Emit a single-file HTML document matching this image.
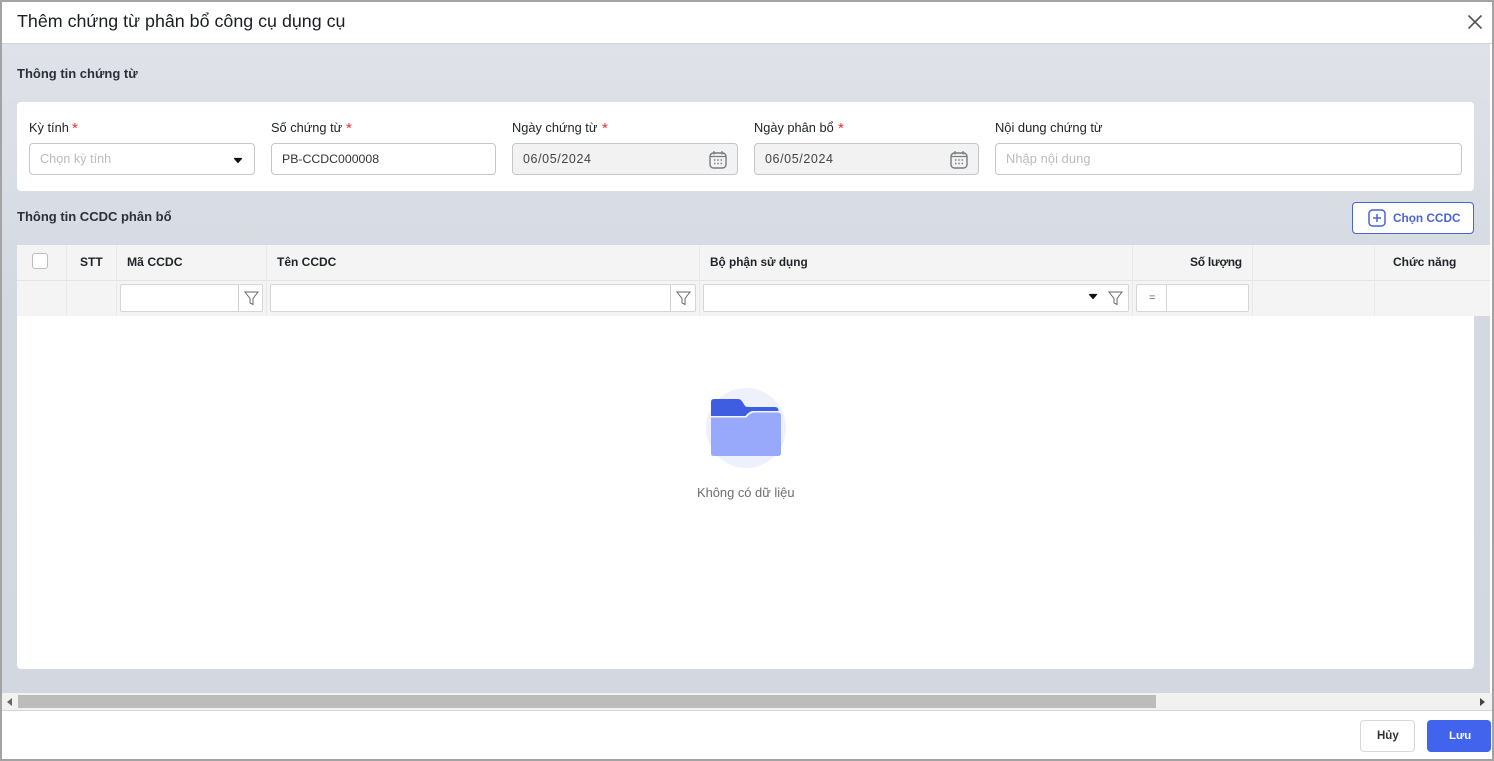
<!DOCTYPE html>
<html><head><meta charset="utf-8"><style>
html,body{margin:0;padding:0;width:1494px;height:761px;overflow:hidden;background:#fff;font-family:"Liberation Sans",sans-serif;color:#212529}
div,span,svg{position:absolute;box-sizing:border-box}
.t{white-space:nowrap;line-height:16px;font-size:12.8px}
.b{font-weight:bold;font-size:12px}
.req{color:#e5303a;font-size:15px}
.inp{height:32px;top:143px;background:#fff;border:1px solid #c4c6ca;border-radius:4px}
.dis{background:#f2f2f3}
.ph{color:#b9bbbe}
.hd{background:#f4f4f4}
.v{width:1px;background:#e9e9e9}
.f{background:#fff;border:1px solid #d6d6d6;border-radius:2px;height:28px;top:284px}
</style></head><body>
<div style="left:0;top:0;width:1494px;height:761px;background:#fff"></div>
<div style="left:2px;top:44px;width:1488px;height:650px;background:linear-gradient(180deg,#dfe2e8 0%,#d4d9e1 40%,#d3d8e0 100%)"></div>
<div style="left:2px;top:43px;width:1490px;height:1px;background:#d3d5d8"></div>

<span class="t" style="left:17px;top:11px;font-size:17.85px;line-height:20px;color:#1b1e22">Thêm chứng từ phân bổ công cụ dụng cụ</span>
<svg style="left:1467px;top:14px" width="16" height="16" viewBox="0 0 16 16"><path d="M1.5 1.5L14.5 14.5M14.5 1.5L1.5 14.5" stroke="#555" stroke-width="1.6" fill="none"/></svg>

<span class="t b" style="left:17px;top:66px;color:#2b303b;font-size:13px">Thông tin chứng từ</span>

<div style="left:17px;top:102px;width:1457px;height:89px;background:#fff;border-radius:4px"></div>
<span class="t" style="left:29px;top:120px">Kỳ tính</span><span class="t req" style="left:72px;top:121px">*</span>
<span class="t" style="left:271px;top:120px">Số chứng từ</span><span class="t req" style="left:346px;top:121px">*</span>
<span class="t" style="left:512px;top:120px">Ngày chứng từ</span><span class="t req" style="left:602px;top:121px">*</span>
<span class="t" style="left:754px;top:120px">Ngày phân bổ</span><span class="t req" style="left:838px;top:121px">*</span>
<span class="t" style="left:995px;top:120px;font-size:12.9px">Nội dung chứng từ</span>

<div class="inp" style="left:29px;width:226px"></div>
<span class="t ph" style="left:40px;top:151px;font-size:12.7px">Chọn kỳ tính</span>
<svg style="left:233px;top:157px" width="10" height="7" viewBox="0 0 10 7"><path d="M1.5 1.5H8.5L5 5.5Z" fill="#111" stroke="#111" stroke-width="1.2" stroke-linejoin="round"/></svg>
<div class="inp" style="left:271px;width:225px"></div>
<span class="t" style="left:282px;top:151px;color:#333;font-size:12.3px">PB-CCDC000008</span>
<div class="inp dis" style="left:512px;width:226px"></div>
<span class="t" style="left:523px;top:151px;color:#444;font-size:12.5px;letter-spacing:.6px">06/05/2024</span>
<svg style="left:709px;top:150px" width="18" height="19" viewBox="0 0 18 19" fill="none" stroke="#777b82" stroke-width="1.4"><rect x="1" y="3" width="16" height="15" rx="3.5"/><path d="M5 1V4.5M13 1V4.5M1.5 6.5H16.5" stroke-width="1.2"/><path d="M5 10h1.4M8.3 10h1.4M11.6 10h1.4M5 13.5h1.4M8.3 13.5h1.4M11.6 13.5h1.4"/></svg>
<div class="inp dis" style="left:754px;width:225px"></div>
<span class="t" style="left:765px;top:151px;color:#444;font-size:12.5px;letter-spacing:.6px">06/05/2024</span>
<svg style="left:950px;top:150px" width="18" height="19" viewBox="0 0 18 19" fill="none" stroke="#777b82" stroke-width="1.4"><rect x="1" y="3" width="16" height="15" rx="3.5"/><path d="M5 1V4.5M13 1V4.5M1.5 6.5H16.5" stroke-width="1.2"/><path d="M5 10h1.4M8.3 10h1.4M11.6 10h1.4M5 13.5h1.4M8.3 13.5h1.4M11.6 13.5h1.4"/></svg>
<div class="inp" style="left:995px;width:467px"></div>
<span class="t ph" style="left:1006px;top:151px;letter-spacing:.1px">Nhập nội dung</span>

<span class="t b" style="left:17px;top:209px;color:#2b303b;font-size:13px">Thông tin CCDC phân bổ</span>
<div style="left:1352px;top:202px;width:122px;height:32px;background:#fff;border:1px solid #4a63d8;border-radius:4px"></div>
<svg style="left:1368px;top:209px" width="18" height="18" viewBox="0 0 18 18" fill="none" stroke="#4a63d8" stroke-width="1.5"><rect x="1" y="1" width="16" height="16" rx="3.5"/><path d="M9 5V13M5 9H13"/></svg>
<span class="t b" style="left:1393px;top:210px;color:#4a63d8;font-size:11.8px">Chọn CCDC</span>

<div class="hd" style="left:17px;top:245px;width:1473px;height:71px"></div>
<div style="left:17px;top:280px;width:1473px;height:1px;background:#e4e4e4"></div>
<div class="v" style="left:66px;top:245px;height:71px"></div>
<div class="v" style="left:116px;top:245px;height:71px"></div>
<div class="v" style="left:266px;top:245px;height:71px"></div>
<div class="v" style="left:699px;top:245px;height:71px"></div>
<div class="v" style="left:1132px;top:245px;height:71px"></div>
<div class="v" style="left:1252px;top:245px;height:71px"></div>
<div class="v" style="left:1374px;top:245px;height:71px"></div>
<div style="left:32px;top:253px;width:16px;height:16px;background:#fff;border:1px solid #bcbcbc;border-radius:3px"></div>
<span class="t b" style="left:80px;top:254px">STT</span>
<span class="t b" style="left:127px;top:254px;font-size:12.2px">Mã CCDC</span>
<span class="t b" style="left:277px;top:254px">Tên CCDC</span>
<span class="t b" style="left:710px;top:254px;font-size:11.8px">Bộ phận sử dụng</span>
<span class="t b" style="left:1190px;top:254px;letter-spacing:-.25px">Số lượng</span>
<span class="t b" style="left:1393px;top:254px">Chức năng</span>

<div class="f" style="left:120px;width:143px"></div>
<div class="v" style="left:238px;top:285px;height:26px;background:#cfcfcf"></div>
<svg style="left:244px;top:291px" width="15" height="15" viewBox="0 0 15 15" fill="none" stroke="#666" stroke-width="1"><path d="M1 1H14L9 7.5V13.5L6 12V7.5Z"/></svg>
<div class="f" style="left:270px;width:426px"></div>
<div class="v" style="left:670px;top:285px;height:26px;background:#cfcfcf"></div>
<svg style="left:676px;top:291px" width="15" height="15" viewBox="0 0 15 15" fill="none" stroke="#666" stroke-width="1"><path d="M1 1H14L9 7.5V13.5L6 12V7.5Z"/></svg>
<div class="f" style="left:703px;width:426px"></div>
<svg style="left:1088px;top:293px" width="10" height="7" viewBox="0 0 10 7"><path d="M1.5 1.5H8.5L5 5.5Z" fill="#111" stroke="#111" stroke-width="1.2" stroke-linejoin="round"/></svg>
<svg style="left:1108px;top:291px" width="15" height="15" viewBox="0 0 15 15" fill="none" stroke="#666" stroke-width="1"><path d="M1 1H14L9 7.5V13.5L6 12V7.5Z"/></svg>
<div class="f" style="left:1136px;width:113px"></div>
<div class="v" style="left:1166px;top:285px;height:26px;background:#d6d6d6"></div>
<span class="t" style="left:1149px;top:290px;font-size:11px;color:#666">=</span>

<div style="left:17px;top:316px;width:1457px;height:353px;background:#fff;border-radius:0 0 4px 4px"></div>
<div style="left:706px;top:388px;width:80px;height:80px;border-radius:50%;background:#eef0fb"></div>
<svg style="left:711px;top:398px" width="70" height="59" viewBox="0 0 70 59"><path d="M0 4Q0 1 3 1H27Q30 1 31.5 4L34 8Q35 9 37 9H64Q67 9 67.5 12V13H42Q38 13.5 34.5 18H0Z" fill="#3f5de0"/><path d="M0 18H34.5Q38 13.5 42 13H67Q70 13 70 16V19H0Z" fill="#f4f6ff"/><path d="M0 19.5H35.5Q39 15 43 14.5H67Q70 14.5 70 17.5V55Q70 58 67 58H3Q0 58 0 55Z" fill="#98a9fb"/></svg>
<span class="t" style="left:697px;top:485px;color:#6e6e6e;font-size:12.9px">Không có dữ liệu</span>

<div style="left:2px;top:693px;width:1490px;height:18px;background:#f1f1f1"></div>
<div style="left:18px;top:695px;width:1138px;height:13px;background:#bdbcbc"></div>
<svg style="left:7px;top:698px" width="5" height="8" viewBox="0 0 5 8"><path d="M5 0V8L0 4Z" fill="#666"/></svg>
<svg style="left:1480px;top:698px" width="5" height="8" viewBox="0 0 5 8"><path d="M0 0V8L5 4Z" fill="#444"/></svg>
<div style="left:2px;top:710px;width:1490px;height:1px;background:#d5d5d5"></div>

<div style="left:1360px;top:720px;width:55px;height:32px;background:#fff;border:1px solid #d5d7da;border-radius:4px"></div>
<span class="t b" style="left:1377px;top:728px;color:#333;font-size:11.5px">Hủy</span>
<div style="left:1427px;top:720px;width:64px;height:32px;background:#4263eb;border-radius:4px"></div>
<span class="t b" style="left:1449px;top:728px;color:#fff;font-size:11.4px">Lưu</span>

<div style="left:0;top:0;width:1494px;height:2px;background:#a3a3a3"></div>
<div style="left:0;top:759px;width:1494px;height:2px;background:#a3a3a3"></div>
<div style="left:0;top:0;width:2px;height:761px;background:#a3a3a3"></div>
<div style="left:1492px;top:0;width:2px;height:761px;background:#a3a3a3"></div>
</body></html>
